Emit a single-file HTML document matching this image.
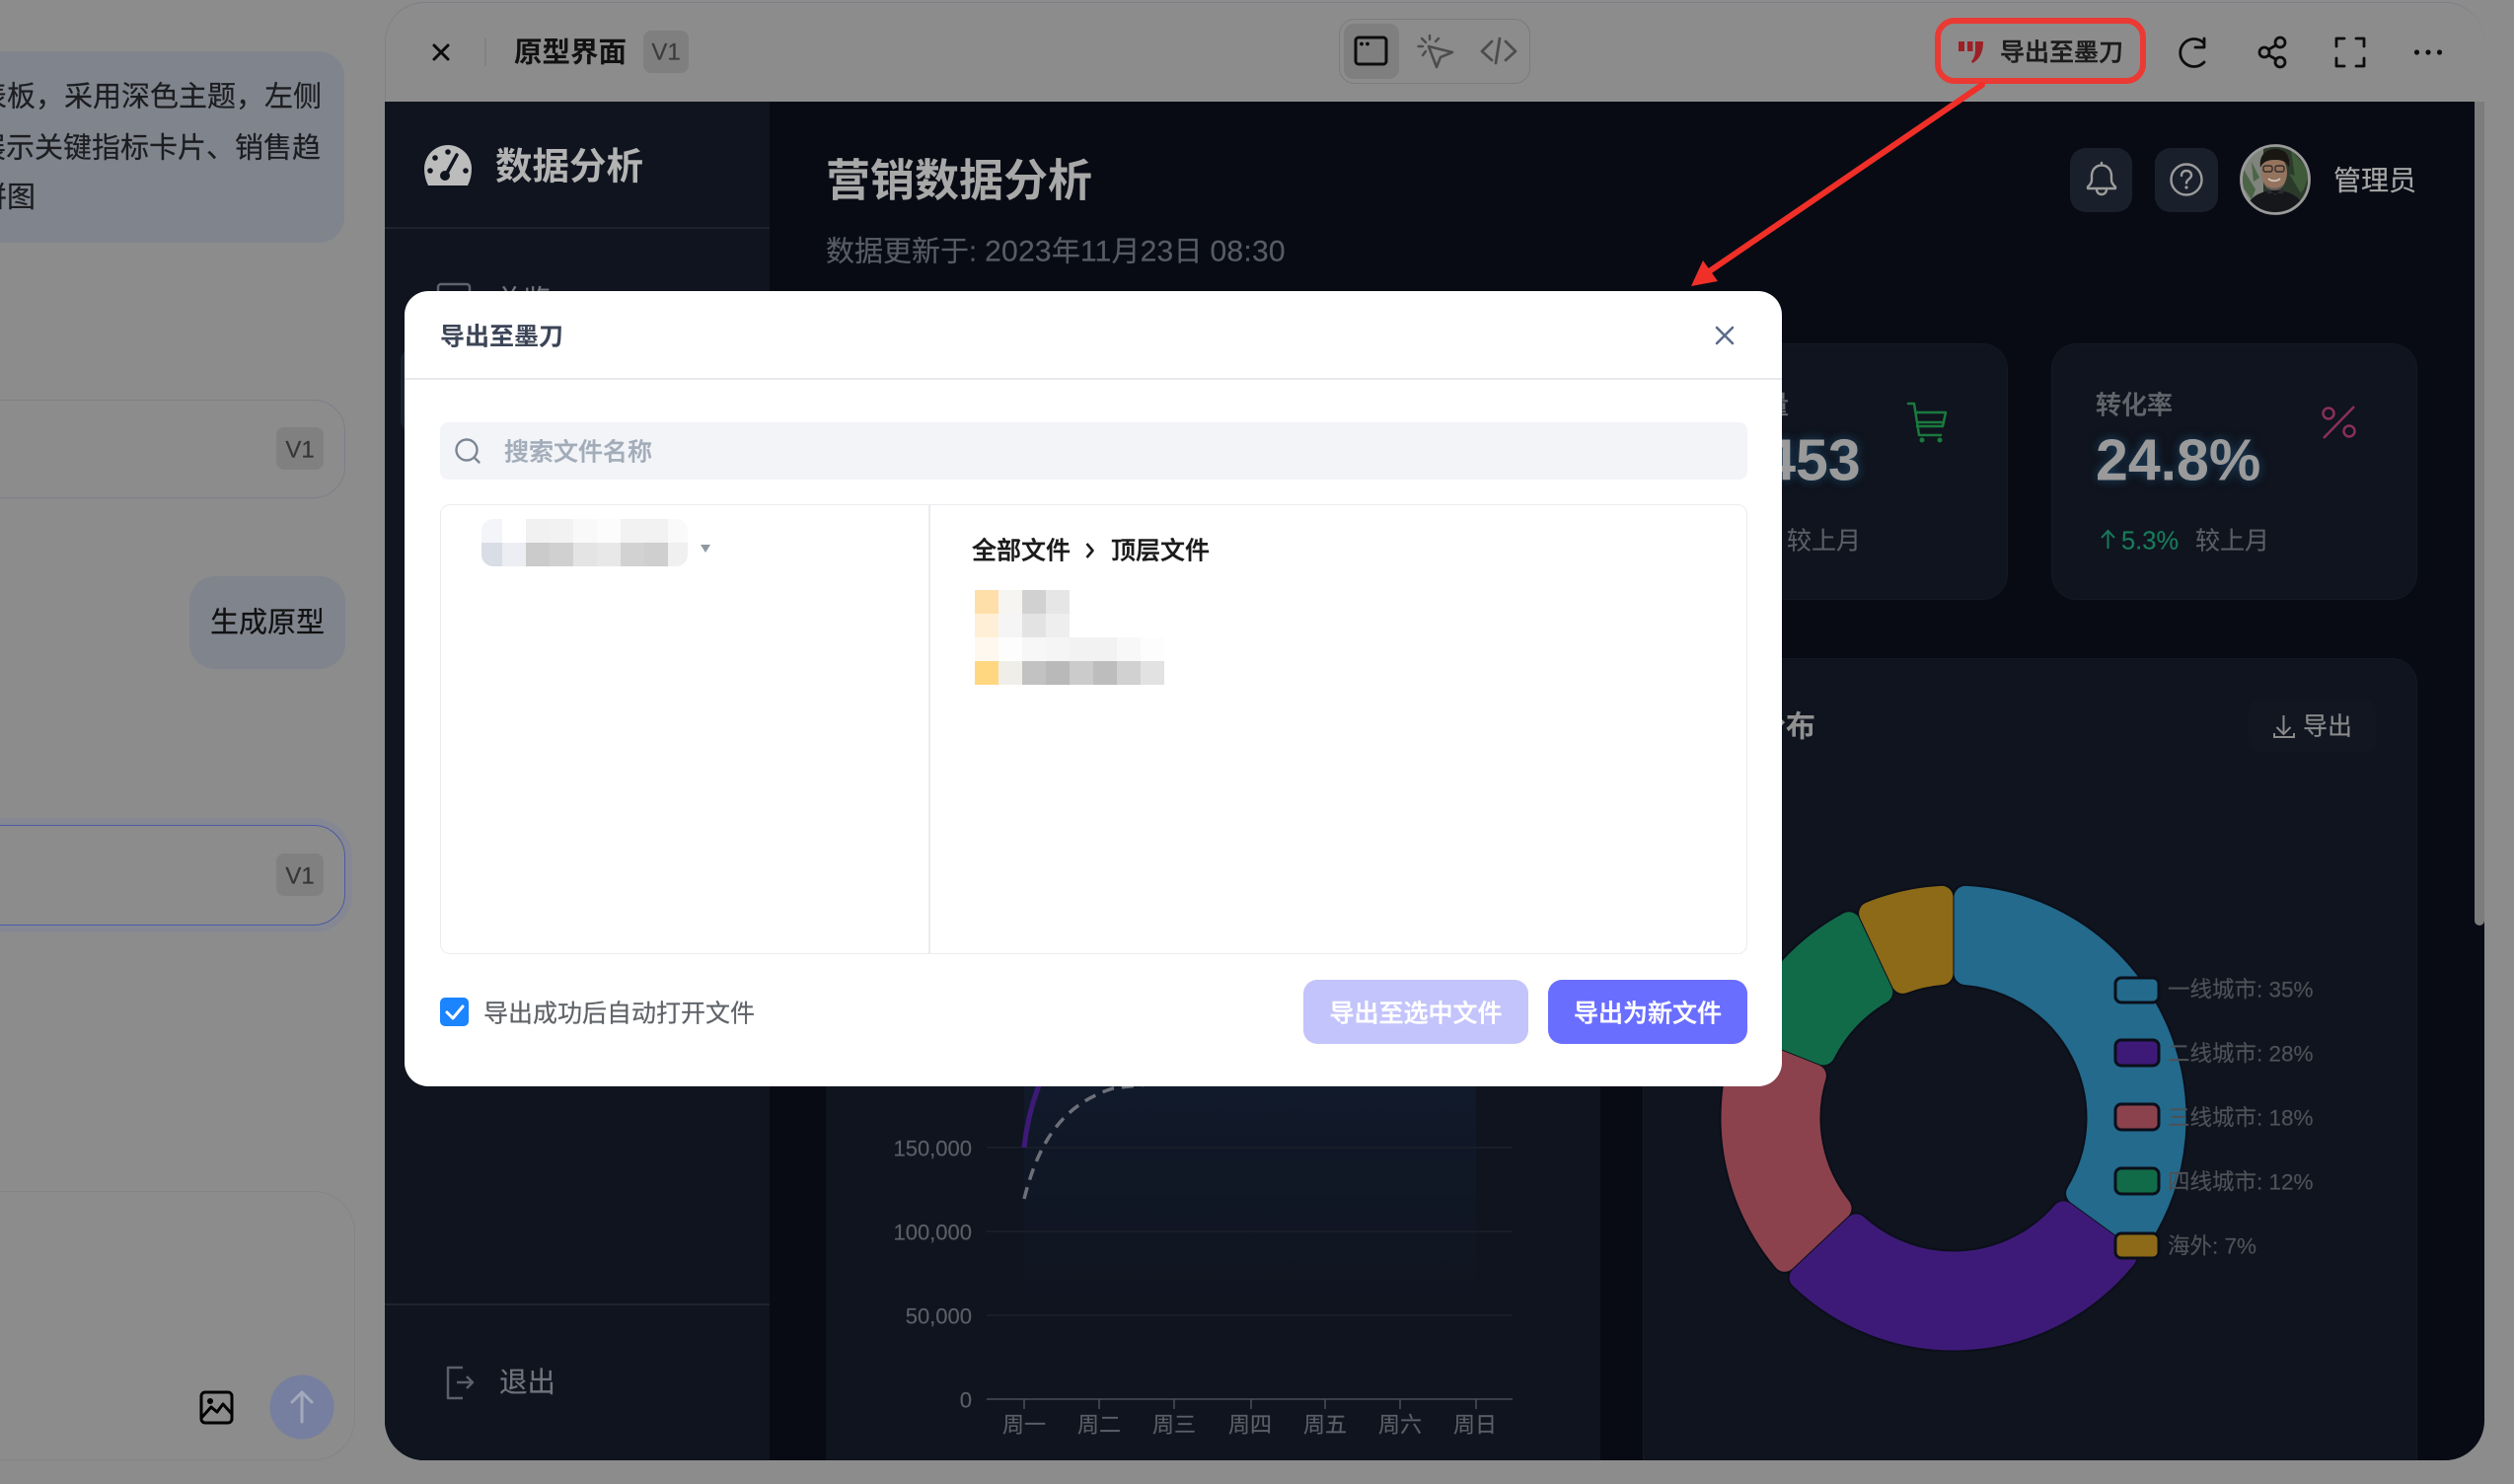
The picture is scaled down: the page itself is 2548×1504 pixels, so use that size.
<!DOCTYPE html>
<html lang="zh">
<head>
<meta charset="utf-8">
<title>导出至墨刀</title>
<style>
html,body{margin:0;padding:0;background:#8c8c8c}
body{width:2548px;height:1504px;overflow:hidden;position:relative;font-family:"Liberation Sans","Noto Sans CJK SC",sans-serif}
div,span{box-sizing:border-box}
.a{position:absolute}
.t{position:absolute;white-space:nowrap;line-height:1.2;transform:translateY(1.5px);-webkit-text-stroke:.2px currentColor}
svg{position:absolute;left:0;top:0;overflow:visible}
.b{font-weight:700;-webkit-text-stroke:0}
.m{font-weight:500;-webkit-text-stroke:.4px currentColor}
</style>
</head>
<body>

<!-- left chat panel -->
<div class="a" style="left:-40px;top:52px;width:389px;height:194px;background:#80848d;border-radius:26px"></div>
<div class="t" style="left:-22px;top:80px;font-size:29px;color:#1c1d20">表板，采用深色主题，左侧</div>
<div class="t" style="left:-23px;top:132px;font-size:29px;color:#1c1d20">展示关键指标卡片、销售趋</div>
<div class="t" style="left:-22px;top:182px;font-size:29px;color:#1c1d20">饼图</div>

<div class="a" style="left:-60px;top:405px;width:410px;height:100px;border:1.5px solid #7d7f88;border-radius:32px"></div>
<div class="a" style="left:280px;top:433px;width:48px;height:43px;background:#808080;border-radius:8px"></div>
<div class="t" style="left:280px;top:441px;width:48px;text-align:center;font-size:24px;color:#363636">V1</div>

<div class="a" style="left:192px;top:584px;width:158px;height:94px;background:#80848d;border-radius:26px"></div>
<div class="t" style="left:213px;top:613px;font-size:29px;color:#111">生成原型</div>

<div class="a" style="left:-60px;top:836px;width:410px;height:102px;border:1.5px solid #4b5aa6;border-radius:32px;box-shadow:0 0 0 7px #858892"></div>
<div class="a" style="left:280px;top:865px;width:48px;height:43px;background:#808080;border-radius:8px"></div>
<div class="t" style="left:280px;top:873px;width:48px;text-align:center;font-size:24px;color:#363636">V1</div>

<div class="a" style="left:-60px;top:1207px;width:420px;height:273px;border:1.5px solid #848484;border-radius:42px"></div>
<svg width="2548" height="1504">
  <g fill="none" stroke="#000" stroke-width="3" stroke-linejoin="round" stroke-linecap="round">
    <rect x="204" y="1411" width="31" height="31" rx="4"/>
    <path d="M205 1436l9-10 6 5 6-8 9 10"/>
  </g>
  <circle cx="213" cy="1420" r="3" fill="#000"/>
  <circle cx="306" cy="1426" r="32.5" fill="#767f9f"/>
  <path d="M306 1441V1411M296 1421l10-10 10 10" fill="none" stroke="#a2a9bc" stroke-width="3" stroke-linecap="round" stroke-linejoin="round"/>
</svg>

<!-- right panel -->
<div class="a" style="left:390px;top:2px;width:2128px;height:1478px;border-radius:40px;overflow:hidden;background:#8c8c8c">
  <div class="a" style="left:-390px;top:-2px;width:2548px;height:1504px">
    <!-- dark backgrounds -->
    <div class="a" style="left:390px;top:103px;width:2128px;height:1401px;background:#080b14"></div>
    <div class="a" style="left:390px;top:103px;width:390px;height:1401px;background:#0f141e"></div>
    <div class="a" style="left:390px;top:230px;width:390px;height:1.5px;background:#1e232e"></div>
    <div class="a" style="left:390px;top:1321px;width:390px;height:1.5px;background:#1e232e"></div>
    <div class="a" style="left:406px;top:353px;width:100px;height:85px;background:#1b2230;border-radius:12px"></div>

    <!-- scrollbar -->
    <div class="a" style="left:2508px;top:103px;width:10px;height:835px;background:#7c7c7c;border-radius:0 0 6px 6px"></div>

    <!-- sidebar -->
    <svg width="2548" height="1504">
      <path d="M434 188Q430 180 430 171A24 24 0 0 1 478 171Q478 180 474 188Z" fill="#bcbcbc"/>
      <g fill="#0f141e"><circle cx="454" cy="154" r="2.8"/><circle cx="441" cy="160" r="2.8"/><circle cx="436" cy="173" r="2.8"/><circle cx="472" cy="173" r="2.8"/></g>
      <path d="M452 177L463 157" stroke="#0f141e" stroke-width="3.5" stroke-linecap="round"/>
      <circle cx="451" cy="178" r="5" fill="#0f141e"/>
      <g fill="none" stroke="#5d626b" stroke-width="2.5">
        <rect x="444" y="288" width="32" height="30" rx="3"/>
        <path d="M444 298H476M456 298V318"/>
      </g>
      <path d="M469 1386H454V1417H469M463 1401H478M473 1395l6 6-6 6" fill="none" stroke="#5b5f68" stroke-width="2.5" stroke-linejoin="round"/>
    </svg>
    <div class="t b" style="left:502px;top:145px;font-size:37.5px;color:#b3b3b3">数据分析</div>
    <div class="t" style="left:502px;top:286px;font-size:28px;color:#74777e">总览</div>
    <div class="t" style="left:506px;top:1383px;font-size:28.5px;color:#6f737b">退出</div>

    <!-- main header -->
    <div class="t b" style="left:837px;top:155px;font-size:45px;color:#a8a8a8">营销数据分析</div>
    <div class="t" style="left:837px;top:236px;font-size:29px;color:#575b64">数据更新于: <span style="font-size:30px;letter-spacing:.25px">2023</span>年<span style="font-size:30px;letter-spacing:.25px">11</span>月<span style="font-size:30px;letter-spacing:.25px">23</span>日 <span style="font-size:30px;letter-spacing:.25px">08:30</span></div>

    <div class="a" style="left:2098px;top:150px;width:63px;height:65px;background:#1a202b;border-radius:16px"></div>
    <div class="a" style="left:2184px;top:150px;width:64px;height:65px;background:#1a202b;border-radius:16px"></div>
    <svg width="2548" height="1504">
      <path d="M2130 165v2.5M2130 167.5c-6 0-10 4.5-10 11v4c0 3-2 5-4 7v1.5h28v-1.5c-2-2-4-4-4-7v-4c0-6.5-4-11-10-11zM2125 191.5c0 3.5 2 5.5 5 5.5s5-2 5-5.5" fill="none" stroke="#9c9c9c" stroke-width="2.4" stroke-linejoin="round" stroke-linecap="round"/>
      <circle cx="2216" cy="182" r="15.5" fill="none" stroke="#9c9c9c" stroke-width="2.4"/>
      <path d="M2211 178c0-3 2-5 5-5s5 2 5 4.5c0 4-5 4-5 8" fill="none" stroke="#9c9c9c" stroke-width="2.4" stroke-linecap="round"/>
      <circle cx="2216" cy="190" r="1.6" fill="#9c9c9c"/>
      <!-- avatar -->
      <clipPath id="av"><circle cx="2306" cy="182" r="34"/></clipPath>
      <g clip-path="url(#av)">
        <rect x="2270" y="146" width="72" height="72" fill="#2c3a2c"/>
        <rect x="2270" y="146" width="24" height="72" fill="#7f847c"/>
        <path d="M2274 172l12 20-4 10-10-14zM2282 164l8 16-6 4z" fill="#4c6446"/>
        <path d="M2322 152l20 22-8 20-8-14zM2320 176l18 6-6 14z" fill="#3e5a38"/>
        <path d="M2275 218c1-16 14-25 31-25s30 9 31 25z" fill="#15171b"/>
        <path d="M2298 190l8 8 8-8v6h-16z" fill="#2a2c30"/>
        <ellipse cx="2305" cy="175" rx="13" ry="18" fill="#94735f"/>
        <path d="M2294 184c3 9 19 9 22 0-1 5-4 9-11 9s-10-4-11-9z" fill="#5e5a56"/>
        <path d="M2291 170c-2-15 8-19 15-19s16 3 14 19c-2-5-5-8-14-8s-13 3-15 8z" fill="#1a1613"/>
        <g fill="none" stroke="#24211e" stroke-width="1.2"><rect x="2294" y="168" width="9" height="6" rx="2"/><rect x="2306" y="168" width="9" height="6" rx="2"/></g>
        <path d="M2299 181c3 3 9 3 12 0" stroke="#d0c6ba" stroke-width="1.8" fill="none"/>
      </g>
      <circle cx="2306" cy="182" r="34.5" fill="none" stroke="#9a9a9a" stroke-width="2.8"/>
    </svg>
    <div class="t" style="left:2365px;top:165px;font-size:28px;color:#a6a6a6">管理员</div>

    <!-- stat cards -->
    <div class="a" style="left:1440px;top:348px;width:595px;height:260px;background:#0f141e;border-radius:26px;border:1px solid #141925"></div>
    <div class="t m" style="left:1761px;top:394px;font-size:26px;color:#62656b">销量</div>
    <div class="t b" style="left:1738px;top:430px;font-size:59px;color:#9a9a9a;text-shadow:0 0 10px rgba(40,110,160,.55)">1,453</div>
    <div class="t" style="left:1811px;top:532px;font-size:25px;color:#5a5d63">较上月</div>
    <svg width="2548" height="1504">
      <path d="M1934 409h6l5 32h22M1942 418h30l-3 14h-26M1944 428h24" fill="none" stroke="#1a7a3d" stroke-width="2.5" stroke-linejoin="round" stroke-linecap="round"/>
      <circle cx="1948" cy="446" r="2.5" fill="#1a7a3d"/><circle cx="1966" cy="446" r="2.5" fill="#1a7a3d"/>
    </svg>

    <div class="a" style="left:2079px;top:348px;width:371px;height:260px;background:#0f141e;border-radius:26px;border:1px solid #141925"></div>
    <div class="t m" style="left:2124px;top:394px;font-size:26px;color:#62656b">转化率</div>
    <div class="t b" style="left:2124px;top:430px;font-size:59px;color:#9a9a9a;text-shadow:0 0 10px rgba(40,110,160,.55)">24.8%</div>
    <svg width="2548" height="1504">
      <path d="M2136.5 556V538M2130 545l6.5-7 6.5 7" fill="none" stroke="#18795a" stroke-width="2"/>
    </svg>
    <div class="t" style="left:2150px;top:532px;font-size:25.5px;color:#18795a">5.3%</div>
    <div class="t" style="left:2225px;top:532px;font-size:25px;color:#5a5d63">较上月</div>
    <svg width="2548" height="1504">
      <g fill="none" stroke="#8a2f5a" stroke-width="2.5">
        <circle cx="2360" cy="419" r="5.5"/><circle cx="2381" cy="437" r="5.5"/><path d="M2386 412L2355 444"/>
      </g>
    </svg>

    <!-- left chart -->
    <div class="a" style="left:837px;top:667px;width:785px;height:900px;background:#0f141e;border-radius:26px"></div>
    <div class="a" style="left:1038px;top:1090px;width:458px;height:250px;background:linear-gradient(#111a2b,#0f141e)"></div>
    <svg width="2548" height="1504">
      <g stroke="#191d28" stroke-width="2">
        <path d="M1000 1163H1533M1000 1248H1533M1000 1333H1533"/>
      </g>
      <path d="M1000 1418H1533" stroke="#3a3e4a" stroke-width="2"/>
      <path d="M1038 1418v10M1114 1418v10M1190 1418v10M1268 1418v10M1343 1418v10M1419 1418v10M1496 1418v10" stroke="#4a4e58" stroke-width="1.5"/>
      <path d="M1038 1163Q1042 1125 1057 1090" fill="none" stroke="#3e1a78" stroke-width="5"/>
      <path d="M1038 1215C1052 1160 1075 1120 1128 1103L1170 1098" fill="none" stroke="#6d7079" stroke-width="3.5" stroke-dasharray="12 8"/>
    </svg>
    <div class="t" style="left:885px;top:1150px;width:100px;text-align:right;font-size:22px;color:#5a5e66">150,000</div>
    <div class="t" style="left:885px;top:1235px;width:100px;text-align:right;font-size:22px;color:#5a5e66">100,000</div>
    <div class="t" style="left:885px;top:1320px;width:100px;text-align:right;font-size:22px;color:#5a5e66">50,000</div>
    <div class="t" style="left:885px;top:1405px;width:100px;text-align:right;font-size:22px;color:#5a5e66">0</div>
    <div class="t" style="left:1016px;top:1430px;font-size:22px;color:#5a5e66">周一</div>
    <div class="t" style="left:1092px;top:1430px;font-size:22px;color:#5a5e66">周二</div>
    <div class="t" style="left:1168px;top:1430px;font-size:22px;color:#5a5e66">周三</div>
    <div class="t" style="left:1245px;top:1430px;font-size:22px;color:#5a5e66">周四</div>
    <div class="t" style="left:1321px;top:1430px;font-size:22px;color:#5a5e66">周五</div>
    <div class="t" style="left:1397px;top:1430px;font-size:22px;color:#5a5e66">周六</div>
    <div class="t" style="left:1473px;top:1430px;font-size:22px;color:#5a5e66">周日</div>

    <!-- donut card -->
    <div class="a" style="left:1665px;top:667px;width:785px;height:900px;background:#0f141e;border-radius:26px;border:1px solid #141925"></div>
    <div class="t b" style="left:1780px;top:718px;font-size:30px;color:#909090">分布</div>
    <div class="a" style="left:2279px;top:710px;width:129px;height:52px;background:#111621;border-radius:10px"></div>
    <svg width="2548" height="1504">
      <path d="M2314.5 725V744M2307.5 737l7 7 7-7M2305 743v4h20v-4" fill="none" stroke="#8a8a8a" stroke-width="2"/>
    </svg>
    <div class="t" style="left:2334px;top:720px;font-size:25px;color:#8a8a8a">导出</div>

    <svg width="2548" height="1504">
      <defs>
        <path id="s1" d="M1992 909.32A224 224 0 0 1 2167.96 1254.86L2105.57 1209.43A147 147 0 0 0 1992 986.49Z"/>
        <path id="s2" d="M2153.9 1274.2A224 224 0 0 1 1825.15 1294.86L1881.4 1242.03A147 147 0 0 0 2091.46 1228.85Z"/>
        <path id="s3" d="M1808.73 1277.37A224 224 0 0 1 1767.6 1061.81L1839.37 1090.22A147 147 0 0 0 1864.97 1224.52Z"/>
        <path id="s4" d="M1776.45 1039.52A224 224 0 0 1 1873.91 935.72L1906.76 1005.54A147 147 0 0 0 1848.17 1067.92Z"/>
        <path id="s5" d="M1895.62 925.51A224 224 0 0 1 1968 909.32L1968 986.49A147 147 0 0 0 1928.48 995.32Z"/>
      </defs>
      <g fill="#0b0f1a" stroke="#0b0f1a" stroke-width="27" stroke-linejoin="round">
        <use href="#s1"/><use href="#s2"/><use href="#s3"/><use href="#s4"/><use href="#s5"/>
      </g>
      <g stroke-width="23" stroke-linejoin="round">
        <use href="#s1" fill="#236a8c" stroke="#236a8c"/>
        <use href="#s2" fill="#3e1a78" stroke="#3e1a78"/>
        <use href="#s3" fill="#8b424c" stroke="#8b424c"/>
        <use href="#s4" fill="#126b48" stroke="#126b48"/>
        <use href="#s5" fill="#8c6a17" stroke="#8c6a17"/>
      </g>
      <g stroke="#0b0f1a" stroke-width="3">
        <rect x="2144" y="991" width="44" height="25" rx="6" fill="#236a8c"/>
        <rect x="2144" y="1054" width="44" height="26" rx="6" fill="#3e1a78"/>
        <rect x="2144" y="1119" width="44" height="26" rx="6" fill="#8b424c"/>
        <rect x="2144" y="1184" width="44" height="26" rx="6" fill="#126b48"/>
        <rect x="2144" y="1250" width="44" height="25" rx="6" fill="#8c6a17"/>
      </g>
    </svg>
    <div class="t" style="left:2197px;top:988px;font-size:22.5px;color:#4e5157">一线城市: 35%</div>
    <div class="t" style="left:2197px;top:1053px;font-size:22.5px;color:#4e5157">二线城市: 28%</div>
    <div class="t" style="left:2197px;top:1118px;font-size:22.5px;color:#4e5157">三线城市: 18%</div>
    <div class="t" style="left:2197px;top:1183px;font-size:22.5px;color:#4e5157">四线城市: 12%</div>
    <div class="t" style="left:2197px;top:1248px;font-size:22.5px;color:#4e5157">海外: 7%</div>

    <!-- top bar -->
    <svg width="2548" height="1504">
      <path d="M440 46L454 60M454 46L440 60" stroke="#0a0a0a" stroke-width="3" stroke-linecap="round"/>
      <path d="M492 38V67" stroke="#7e7e7e" stroke-width="1.5"/>
    </svg>
    <div class="t b" style="left:521px;top:35px;font-size:28.5px;color:#111">原型界面</div>
    <div class="a" style="left:652px;top:31px;width:46px;height:43px;background:#7f7f7f;border-radius:8px"></div>
    <div class="t" style="left:652px;top:38px;width:46px;text-align:center;font-size:24px;color:#3c3c3c">V1</div>

    <div class="a" style="left:1357px;top:19px;width:194px;height:66px;border:1.5px solid #7b7b7b;border-radius:16px"></div>
    <div class="a" style="left:1362px;top:24px;width:56px;height:56px;background:#7f7f7f;border-radius:10px"></div>
    <svg width="2548" height="1504">
      <rect x="1374" y="38" width="31" height="27" rx="3" fill="none" stroke="#0c0c0c" stroke-width="3"/>
      <circle cx="1380" cy="44.5" r="1.9" fill="#0c0c0c"/><circle cx="1386" cy="44.5" r="1.9" fill="#0c0c0c"/>
      <path d="M1448 47L1472 53 1460 58 1456 68Z" fill="none" stroke="#4d4d4d" stroke-width="2.6" stroke-linejoin="round"/>
      <path d="M1449 36v4M1458 39l-3 3M1441 39l4 4M1437.5 47h4.5M1442 56l3-4" stroke="#4d4d4d" stroke-width="2.4" stroke-linecap="round"/>
      <path d="M1512 42l-10 10 10 9M1526 42l10 10-10 9M1520 39l-4 25" fill="none" stroke="#4d4d4d" stroke-width="2.8" stroke-linecap="round" stroke-linejoin="round"/>
      <!-- logo -->
      <path d="M1985 42h6v10h-6zM1994 42h5.500v10h-5.500z" fill="#9c2026"/>
      <path d="M2002 42h8c0 10-3 18-11 22l-1-2c3-3 4-7 4-12z" fill="#9c2026"/>
      <!-- refresh -->
      <path d="M2233 43A14 14 0 1 0 2234 63" fill="none" stroke="#0d0d0d" stroke-width="2.8" stroke-linecap="round"/>
      <path d="M2234 39v9h-9" fill="none" stroke="#0d0d0d" stroke-width="2.8" stroke-linejoin="round" stroke-linecap="round"/>
      <!-- share -->
      <g fill="none" stroke="#0d0d0d" stroke-width="2.8">
        <circle cx="2311" cy="43" r="5"/><circle cx="2295" cy="53" r="5"/><circle cx="2311" cy="63" r="5"/>
        <path d="M2306.5 46L2299.5 50M2299.5 56L2306.5 60"/>
      </g>
      <!-- fullscreen -->
      <path d="M2368 47V39H2376M2388 39H2396V47M2396 59V67H2388M2376 67H2368V59" fill="none" stroke="#0d0d0d" stroke-width="2.8" stroke-linejoin="round" stroke-linecap="round"/>
      <circle cx="2449.5" cy="53" r="2.6" fill="#0d0d0d"/><circle cx="2461" cy="53" r="2.6" fill="#0d0d0d"/><circle cx="2472.5" cy="53" r="2.6" fill="#0d0d0d"/>
    </svg>
    <div class="t m" style="left:2027px;top:37px;font-size:25px;color:#1c1c1c">导出至墨刀</div>
  </div>
</div>
<div class="a" style="left:390px;top:2px;width:2128px;height:1478px;border-radius:40px;border:1.5px solid #7e7f86;border-bottom:none;border-left:1.5px solid #80808a;border-right:none;clip-path:inset(0 0 1378px 0)"></div>

<!-- modal -->
<div class="a" style="left:410px;top:295px;width:1396px;height:806px;background:#fff;border-radius:24px">
  <div class="a" style="left:0;top:88px;width:1396px;height:1.5px;background:#e8e9ec"></div>
  <div class="t b" style="left:36px;top:30px;font-size:25px;color:#3c4557">导出至墨刀</div>
  <svg width="1396" height="806">
    <path d="M1330 37L1346 53M1346 37L1330 53" stroke="#5b6b8c" stroke-width="2.6" stroke-linecap="round"/>
  </svg>
  <div class="a" style="left:36px;top:133px;width:1325px;height:58px;background:#f3f4f8;border-radius:8px"></div>
  <svg width="1396" height="806">
    <circle cx="63" cy="161" r="10.5" fill="none" stroke="#7c8694" stroke-width="2.4"/>
    <path d="M71 169l4.500 4.500" stroke="#7c8694" stroke-width="2.4" stroke-linecap="round"/>
  </svg>
  <div class="t m" style="left:101px;top:147px;font-size:25px;color:#a3adba">搜索文件名称</div>

  <div class="a" style="left:36px;top:216px;width:1325px;height:456px;border:1.5px solid #ebecef;border-radius:10px"></div>
  <div class="a" style="left:531px;top:216px;width:1.5px;height:456px;background:#ebecef"></div>

  <!-- mosaic tree -->
  <div class="a" style="left:78px;top:231px;width:209px;height:48px;border-radius:12px;overflow:hidden;display:grid;grid-template-columns:21px 24px 24px 24px 24px 24px 24px 24px 20px;grid-template-rows:24px 24px">
    <span style="background:#f4f5f8"></span><span style="background:#fff"></span><span style="background:#f1f1f1"></span><span style="background:#f2f2f2"></span><span style="background:#f9f9f9"></span><span style="background:#fcfcfc"></span><span style="background:#f2f2f2"></span><span style="background:#f2f2f2"></span><span style="background:#fafafa"></span>
    <span style="background:#d9dde5"></span><span style="background:#eceef3"></span><span style="background:#cbcbcb"></span><span style="background:#d0d0d0"></span><span style="background:#e4e4e4"></span><span style="background:#e8e8e8"></span><span style="background:#d2d2d2"></span><span style="background:#cfcfcf"></span><span style="background:#f0f0f0"></span>
  </div>
  <svg width="1396" height="806">
    <path d="M300 257h10l-5 8z" fill="#8d989f"/>
  </svg>

  <div class="t m" style="left:575px;top:247px;font-size:25px;color:#1b1b1b">全部文件</div>
  <svg width="1396" height="806"><path d="M691.500 256l6 7-6 7" fill="none" stroke="#1b1b1b" stroke-width="2.6" stroke-linejoin="round"/></svg>
  <div class="t m" style="left:716px;top:247px;font-size:25px;color:#1b1b1b">顶层文件</div>

  <!-- mosaic file -->
  <div class="a" style="left:578px;top:303px;width:196px;height:96px;display:grid;grid-template-columns:24px 24px 24px 24px 24px 24px 24px 24px;grid-template-rows:24px 24px 24px 24px;margin-left:0">
    <span style="background:#ffdfa9"></span><span style="background:#f7f5f2"></span><span style="background:#d1d1d1"></span><span style="background:#e6e6e6"></span><span></span><span></span><span></span><span></span>
    <span style="background:#ffefd6"></span><span style="background:#f5f5f5"></span><span style="background:#e3e3e3"></span><span style="background:#eeeeee"></span><span></span><span></span><span></span><span></span>
    <span style="background:#fff8ef"></span><span style="background:#fdfdfd"></span><span style="background:#f7f7f7"></span><span style="background:#f5f5f5"></span><span style="background:#f2f2f2"></span><span style="background:#f2f2f2"></span><span style="background:#f8f8f8"></span><span style="background:#fdfdfd"></span>
    <span style="background:#ffd780"></span><span style="background:#efeee8"></span><span style="background:#c2c2c2"></span><span style="background:#b9b9b9"></span><span style="background:#cbcbcb"></span><span style="background:#bdbdbd"></span><span style="background:#d1d1d1"></span><span style="background:#e2e2e2"></span>
  </div>

  <!-- footer -->
  <div class="a" style="left:36px;top:716px;width:29px;height:29px;background:#1b84ff;border-radius:5px"></div>
  <svg width="1396" height="806"><path d="M43 731l6 6 10-12" fill="none" stroke="#fff" stroke-width="3" stroke-linecap="round" stroke-linejoin="round"/></svg>
  <div class="t" style="left:80px;top:716px;font-size:25px;color:#5f6368">导出成功后自动打开文件</div>
  <div class="a" style="left:911px;top:698px;width:228px;height:65px;background:#c3c4fb;border-radius:14px"></div>
  <div class="t m" style="left:911px;top:716px;width:228px;text-align:center;font-size:25px;color:#fff">导出至选中文件</div>
  <div class="a" style="left:1159px;top:698px;width:202px;height:65px;background:#6a6eff;border-radius:14px"></div>
  <div class="t m" style="left:1159px;top:716px;width:202px;text-align:center;font-size:25px;color:#fff">导出为新文件</div>
</div>

<!-- annotation -->
<div class="a" style="left:1961px;top:18px;width:214px;height:67px;border:6.5px solid #ea3a33;border-radius:20px"></div>
<svg width="2548" height="1504">
  <path d="M2009 86L1728 278" stroke="#f02f28" stroke-width="6" stroke-linecap="round"/>
  <polygon points="1714,290 1726,264 1741,285" fill="#f02f28"/>
</svg>

</body>
</html>
